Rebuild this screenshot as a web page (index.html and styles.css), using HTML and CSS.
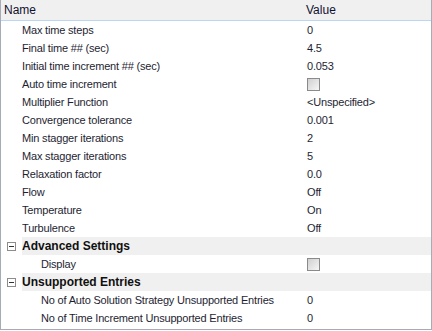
FILE: index.html
```html
<!DOCTYPE html>
<html lang="en">
<head>
  <meta charset="UTF-8">
  <title>Properties</title>
  <link rel="stylesheet" href="styles.css">
</head>
<body>

  <div class="grid">
    <div class="head">
      <span class="name">Name</span>
      <span class="value">Value</span>
    </div>

    <div class="row"><span class="name">Max time steps</span><span class="value">0</span></div>
    <div class="row"><span class="name">Final time ## (sec)</span><span class="value">4.5</span></div>
    <div class="row"><span class="name">Initial time increment ## (sec)</span><span class="value">0.053</span></div>
    <div class="row"><span class="name">Auto time increment</span><span class="value"><span class="check"></span></span></div>
    <div class="row"><span class="name">Multiplier Function</span><span class="value">&lt;Unspecified&gt;</span></div>
    <div class="row"><span class="name">Convergence tolerance</span><span class="value">0.001</span></div>
    <div class="row"><span class="name">Min stagger iterations</span><span class="value">2</span></div>
    <div class="row"><span class="name">Max stagger iterations</span><span class="value">5</span></div>
    <div class="row"><span class="name">Relaxation factor</span><span class="value">0.0</span></div>
    <div class="row"><span class="name">Flow</span><span class="value">Off</span></div>
    <div class="row"><span class="name">Temperature</span><span class="value">On</span></div>
    <div class="row"><span class="name">Turbulence</span><span class="value">Off</span></div>

    <div class="group"><span class="toggle"></span><span class="label">Advanced Settings</span></div>
    <div class="row sub"><span class="name">Display</span><span class="value"><span class="check"></span></span></div>

    <div class="group"><span class="toggle"></span><span class="label">Unsupported Entries</span></div>
    <div class="row sub"><span class="name">No of Auto Solution Strategy Unsupported Entries</span><span class="value">0</span></div>
    <div class="row sub"><span class="name">No of Time Increment Unsupported Entries</span><span class="value">0</span></div>
  </div>

</body>
</html>
```

FILE: styles.css
```css
body {
  margin: 0;
  background: #fff;
  font-family: 'Liberation Sans', Arial, sans-serif;
  font-size: 11px;
  letter-spacing: -0.18px;
  color: #1e1e32;
}
.grid {
  width: 432px;
  height: 330px;
  box-sizing: border-box;
  border: 1px solid #a5acb5;
  border-top: none;
  overflow: hidden;
}
.head {
  display: flex;
  height: 20px;
  align-items: center;
  background: #f0f0f0;
  border-bottom: 1px solid #b9d7f5;
  font-size: 12px;
  letter-spacing: 0;
  color: #101030;
}
.head .name {
  width: 302px;
  padding-left: 3px;
}
.row {
  display: flex;
  height: 18px;
  align-items: center;
}
.row .name {
  width: 285px;
  padding-left: 21px;
  white-space: nowrap;
}
.row.sub .name {
  width: 266px;
  padding-left: 40px;
}
.value {
  display: flex;
  align-items: center;
}
.check {
  width: 11px;
  height: 11px;
  border: 1px solid #8a8a8a;
  background: linear-gradient(135deg, #d0d0d0, #f6f6f6);
}
.group {
  display: flex;
  height: 18px;
  align-items: center;
}
.toggle {
  width: 7px;
  height: 7px;
  margin: 0 6px 0 6px;
  border: 1px solid #8c8c8c;
  position: relative;
}
.toggle::after {
  content: "";
  position: absolute;
  left: 1px;
  top: 3px;
  width: 5px;
  height: 1px;
  background: #333;
}
.label {
  flex: 1;
  height: 18px;
  line-height: 18px;
  background: #f0f0f0;
  font-weight: bold;
  font-size: 12px;
  letter-spacing: 0;
  color: #101010;
}
```
